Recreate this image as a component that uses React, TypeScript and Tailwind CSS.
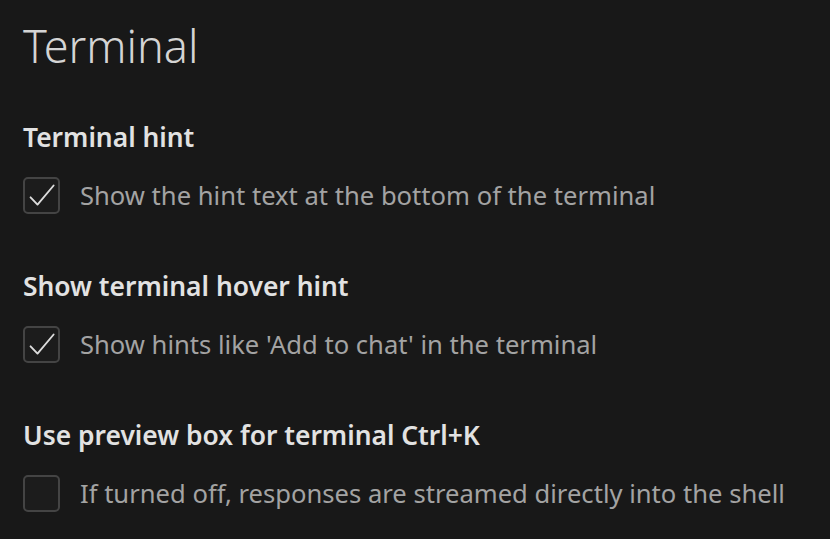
const SETTINGS = [
  { title: "Terminal hint", desc: "Show the hint text at the bottom of the terminal", checked: true },
  { title: "Show terminal hover hint", desc: "Show hints like 'Add to chat' in the terminal", checked: true },
  { title: "Use preview box for terminal Ctrl+K", desc: "If turned off, responses are streamed directly into the shell", checked: false },
];

function CheckIcon() {
  return (
    <svg width="30" height="30" viewBox="0 0 16 16" fill="none">
      <path d="M1.9 8.7 L5.6 12.6 L14.2 2.4" stroke="#dcdcdc" strokeWidth="1" strokeLinecap="round" strokeLinejoin="round" />
    </svg>
  );
}

export default function App() {
  return (
    <div className="w-[830px] h-[539px] overflow-hidden bg-[#181818] px-[23px] pt-[14px] font-['Noto_Sans',sans-serif]">
      <h1 className="text-[45px] leading-[64px] font-light text-[#d4d4d4]">Terminal</h1>

      <div className="mt-[42px] flex flex-col gap-[55px]">
        {SETTINGS.map((s) => (
          <div key={s.title}>
            <h2 className="text-[26.4px] leading-[34px] font-semibold text-[#e2e2e2]">{s.title}</h2>
            <label className="mt-[23px] flex items-center gap-[20px]">
              <span className="w-[37px] h-[37px] rounded-[5px] border-2 border-[#444] bg-[#1c1c1c] flex items-center justify-center">
                {s.checked && <CheckIcon />}
              </span>
              <span className="text-[25.6px] leading-[34px] text-[#a3a3a3]">{s.desc}</span>
            </label>
          </div>
        ))}
      </div>
    </div>
  );
}
